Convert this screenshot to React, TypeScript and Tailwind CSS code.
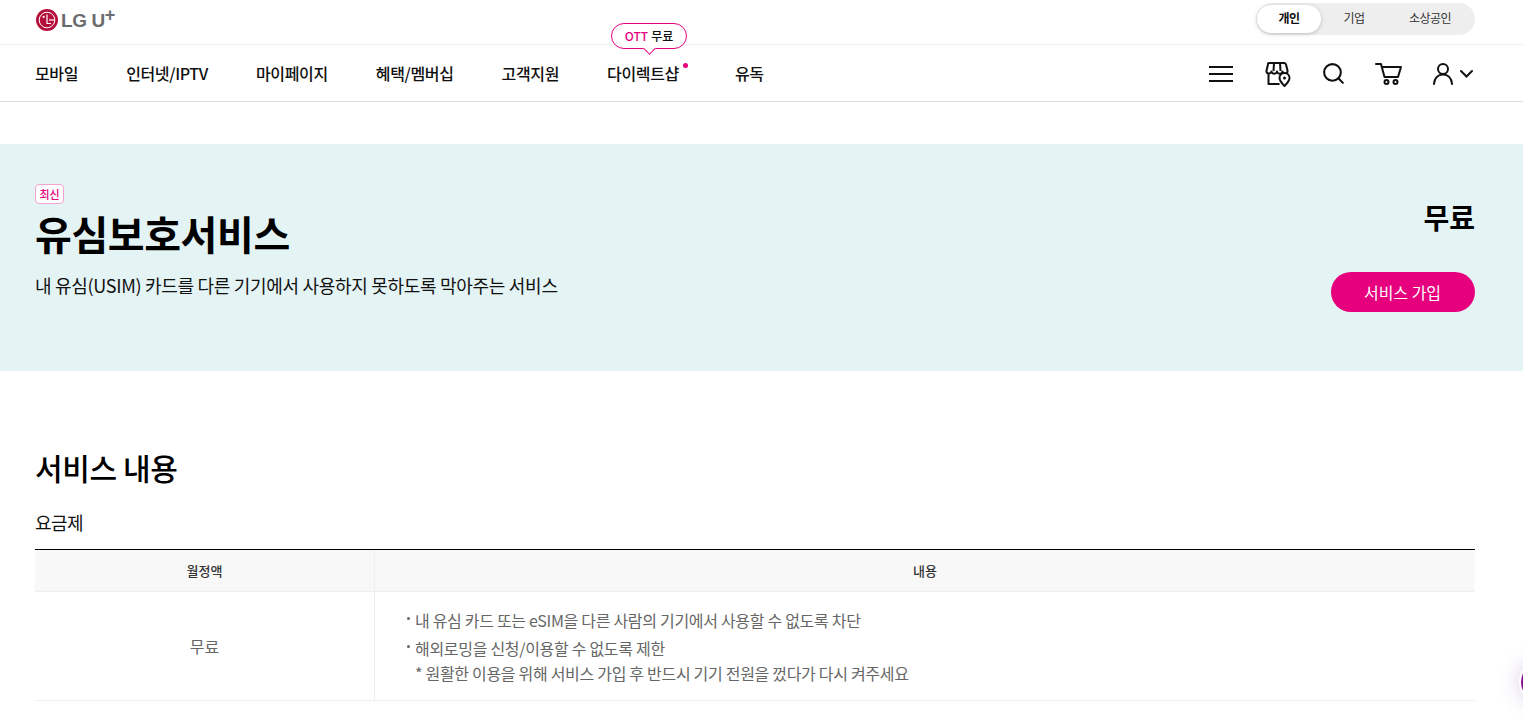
import { Search } from "lucide-react";

const font = "font-['Noto_Sans_CJK_KR','Noto_Sans',sans-serif]";

const navItems = ["모바일", "인터넷/IPTV", "마이페이지", "혜택/멤버십", "고객지원", "다이렉트샵", "유독"];

function LgFace() {
  return (
    <svg width="22" height="22" viewBox="0 0 22 22" className="shrink-0 ml-[1px]">
      <circle cx="11" cy="11" r="11" fill="#b5103c" />
      <circle cx="11" cy="11" r="7.8" fill="none" stroke="#fff" strokeWidth="1" />
      <circle cx="7.6" cy="7.8" r="1.1" fill="#fff" />
      <path d="M11 5.5v9h4" fill="none" stroke="#fff" strokeWidth="1.2" />
      <path d="M13 11h5" fill="none" stroke="#fff" strokeWidth="1.2" />
    </svg>
  );
}

function MenuIcon() {
  return (
    <svg width="24" height="18" viewBox="0 0 24 18" fill="none" stroke="#111" strokeWidth="2">
      <path d="M0 2h24M0 9h24M0 16h24" />
    </svg>
  );
}

function ShopIcon() {
  return (
    <svg width="26" height="26" viewBox="0 0 26 26" fill="none" stroke="#111" strokeWidth="2" strokeLinejoin="round">
      <path d="M3.500 13v10h11" />
      <path d="M4 2h15q1.500 0 2 1.500l1.500 6c.5 3.500-4 4-5 1-.8 3-4.500 3-5.500 0-1 3-4.500 3-5.500 0-1 3-5.500 2.500-5-1l1.500-6Q2.800 2 4 2z" />
      <path d="M9 2 8.500 10M15 2l.5 8" />
      <path d="M19.500 25c-2.500-2.500-5-5-5-8a5 5 0 0 1 10 0c0 3-2.500 5.500-5 8z" fill="#fff" />
      <circle cx="19.500" cy="17" r="1.500" fill="#111" stroke="none" />
    </svg>
  );
}

function CartIcon() {
  return (
    <svg width="28" height="24" viewBox="0 0 28 24" fill="none" stroke="#111" strokeWidth="2" strokeLinejoin="round" strokeLinecap="round">
      <path d="M1 2h5l3.500 13h13.500l3-10H7" />
      <circle cx="11.500" cy="20" r="2" />
      <circle cx="20.500" cy="20" r="2" />
    </svg>
  );
}

function UserIcon() {
  return (
    <svg width="43" height="24" viewBox="0 0 43 24" fill="none" stroke="#111" strokeWidth="2" strokeLinecap="round">
      <circle cx="11" cy="7" r="5" />
      <path d="M2 22c.5-6 4-9.500 9-9.500s8.500 3.500 9 9.500" />
      <path d="M29 9l5.500 5.500L40 9" />
    </svg>
  );
}

export default function App() {
  return (
    <div className={`${font} h-[726px] relative overflow-hidden bg-white text-[#111]`}>
      {/* 상단 바 */}
      <div className="h-[45px] border-b border-[#eeeeee] pl-[35px] pr-[48px] flex justify-between">
        <div className="flex items-start pt-[9px]">
          <LgFace />
          <span className="ml-[3px] font-['Liberation_Sans',sans-serif] font-bold text-[19px] leading-[23px] text-[#6b6c6e] tracking-[-0.4px]">LG U</span>
          <span className="font-['Liberation_Sans',sans-serif] font-bold text-[18px] leading-[13px] text-[#6b6c6e]">+</span>
        </div>
        <div className="mt-[3px] h-[32px] w-[219px] rounded-full bg-[#eeeeee] flex items-center text-[12px] tracking-[-0.6px] text-[#333]">
          <div className="w-[64px] h-[28px] ml-[1px] pb-[3px] rounded-full bg-white shadow-[0_1px_4px_rgba(0,0,0,0.2)] flex items-center justify-center font-bold text-[#111]">개인</div>
          <div className="w-[66px] pb-[3px] text-center">기업</div>
          <div className="w-[86px] pb-[3px] text-center">소상공인</div>
        </div>
      </div>

      {/* 메인 메뉴 */}
      <div className="h-[57px] border-b border-[#dddddd] pl-[35px] pr-[48px] flex items-center justify-between">
        <div className="flex gap-[48px] text-[16px] font-medium tracking-[-0.35px]">
          {navItems.map((item) => (
            <div key={item} className={item === "다이렉트샵" ? "relative whitespace-nowrap mr-[8px]" : "relative whitespace-nowrap"}>
              {item}
              {item === "다이렉트샵" && (
                <>
                  <span className="absolute right-[-9px] top-[2px] w-[5px] h-[5px] rounded-full bg-[#e6007e]" />
                  <div className="absolute left-[4px] top-[-38px] w-[76px] h-[26px] rounded-[13px] border border-[#e6007e] bg-white flex items-center justify-center text-[12px] leading-none gap-[3px] tracking-normal">
                    <span className="text-[#e6007e]">OTT</span>
                    <span>무료</span>
                    <span className="absolute left-[33px] bottom-[-5px] w-[9px] h-[9px] rotate-45 bg-white border-r border-b border-[#e6007e]" />
                  </div>
                </>
              )}
            </div>
          ))}
        </div>
        <div className="flex items-center pt-[1px]">
          <MenuIcon />
          <div className="ml-[32px]"><ShopIcon /></div>
          <Search size={25} strokeWidth={2} className="ml-[30px]" />
          <div className="ml-[29px]"><CartIcon /></div>
          <div className="ml-[29px]"><UserIcon /></div>
        </div>
      </div>

      {/* 히어로 */}
      <div className="mt-[42px] h-[227px] bg-[#e4f3f4] pl-[35px] pr-[48px] pt-[40px] flex justify-between">
        <div>
          <div className="w-[29px] h-[20px] rounded-[4px] border border-[#f5a3cf] bg-white text-[#e6007e] text-[11px] font-medium leading-[18px] text-center">최신</div>
          <h1 className="mt-[1px] text-[40px] leading-[56px] font-bold text-black tracking-[-0.4px]">유심보호서비스</h1>
          <p className="mt-[11px] text-[18px] leading-[26px] tracking-[-0.3px]">내 유심(USIM) 카드를 다른 기기에서 사용하지 못하도록 막아주는 서비스</p>
        </div>
        <div className="flex flex-col items-end">
          <div className="mt-[12px] text-[28px] leading-[42px] font-bold text-black">무료</div>
          <button className="mt-[34px] w-[144px] h-[40px] pr-[1px] rounded-full bg-[#e6007e] text-white text-[16px]">서비스 가입</button>
        </div>
      </div>

      {/* 서비스 내용 */}
      <div className="pl-[35px] pr-[48px]">
        <h2 className="mt-[74px] text-[30px] leading-[44px] font-medium text-black tracking-[-0.4px]">서비스 내용</h2>
        <div className="mt-[20px] text-[18px] leading-[26px] tracking-[-0.5px]">요금제</div>
        <div className="mt-[14px] border-t border-black">
          <div className="flex h-[42px] bg-[#f8f8f8] border-b border-[#eeeeee] text-[13px] font-medium text-[#333] items-center">
            <div className="w-[340px] h-full flex items-center justify-center border-r border-[#eeeeee]">월정액</div>
            <div className="flex-1 text-center">내용</div>
          </div>
          <div className="flex h-[109px] border-b border-[#eeeeee] text-[16px] text-[#666666]">
            <div className="w-[340px] flex items-center justify-center border-r border-[#eeeeee]">무료</div>
            <div className="pl-[40px] pt-[16px] leading-[24px] tracking-[-0.3px]">
              <div className="relative before:content-[''] before:absolute before:left-[-8px] before:top-[9px] before:w-[3px] before:h-[3px] before:rounded-full before:bg-[#666]">내 유심 카드 또는 eSIM을 다른 사람의 기기에서 사용할 수 없도록 차단</div>
              <div className="mt-[4px] relative before:content-[''] before:absolute before:left-[-8px] before:top-[9px] before:w-[3px] before:h-[3px] before:rounded-full before:bg-[#666]">해외로밍을 신청/이용할 수 없도록 제한</div>
              <div className="mt-[1px]">* 원활한 이용을 위해 서비스 가입 후 반드시 기기 전원을 껐다가 다시 켜주세요</div>
            </div>
          </div>
        </div>
      </div>

      {/* 플로팅 버튼 */}
      <div className="absolute left-[1519px] top-[660px] w-[44px] h-[44px] rounded-full bg-[#8a0b96] border-2 border-white shadow-[0_0_20px_rgba(110,60,180,0.25)]" />
    </div>
  );
}
